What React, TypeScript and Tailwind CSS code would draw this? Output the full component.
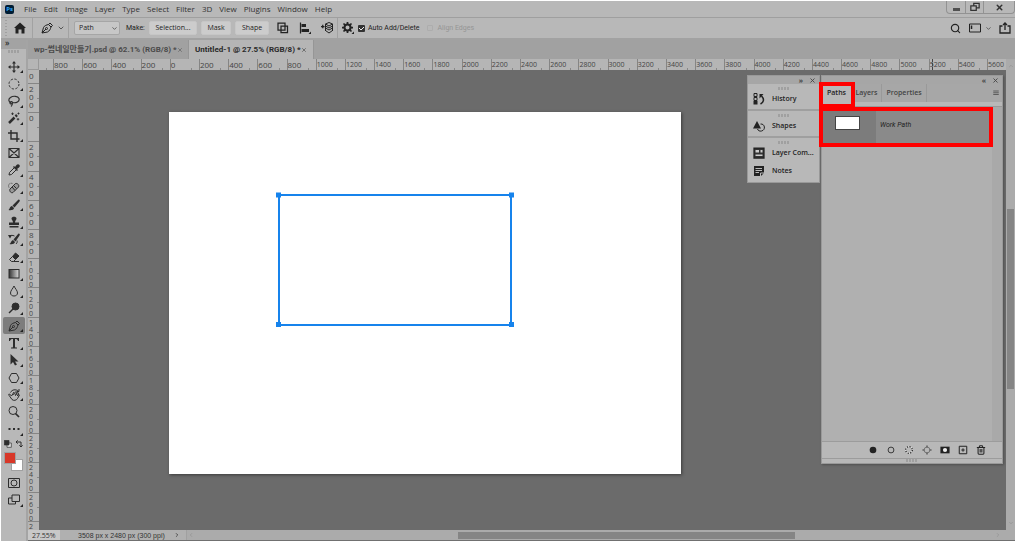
import React from "react";
import { ChevronDown, Search, Trash2, X } from "lucide-react";

type ToolProps = {
  name: string;
  icon: React.ReactNode;
  active?: boolean;
  single?: boolean;
};

const menus = [
  "File",
  "Edit",
  "Image",
  "Layer",
  "Type",
  "Select",
  "Filter",
  "3D",
  "View",
  "Plugins",
  "Window",
  "Help",
];

const Svg = ({
  children,
  size = "size-3",
}: {
  children: React.ReactNode;
  size?: string;
}) => (
  <svg
    viewBox="0 0 24 24"
    fill="none"
    stroke="currentColor"
    strokeWidth="2"
    className={`${size} shrink-0`}
    aria-hidden="true"
  >
    {children}
  </svg>
);

const PenIcon = () => (
  <Svg>
    <path d="M2 22L5 11C7 7 11 6 15 5L20 10C19 14 17 18 13 20L2 22Z" />
    <path d="M15 5L18 2L23 7L20 10M2 22L10 14" />
    <circle cx="11" cy="13" r="2" />
  </Svg>
);

const tools: ToolProps[] = [
  {
    name: "Move",
    icon: (
      <Svg>
        <path d="M12 2V22M2 12H22" strokeWidth="2.4" />
        <path
          d="M12 0L16 5H8ZM12 24L16 19H8ZM0 12L5 8V16ZM24 12L19 8V16Z"
          fill="currentColor"
          stroke="none"
        />
      </Svg>
    ),
  },
  {
    name: "Elliptical Marquee",
    icon: (
      <Svg>
        <circle cx="12" cy="12" r="10" strokeDasharray="4.5 3.3" />
      </Svg>
    ),
  },
  {
    name: "Lasso",
    icon: (
      <Svg>
        <path d="M6 16C1 14 0 8 5 5C10 1 20 2 22 7C24 13 16 17 9 15" strokeWidth="2.3" />
        <path d="M9 15C8 12 4 13 4 16C4 19 9 18 9 15C9 18 9 21 6 23" strokeWidth="2.3" />
      </Svg>
    ),
  },
  {
    name: "Magic Wand",
    icon: (
      <Svg>
        <path d="M2 22L13 11" strokeWidth="5" />
        <path d="M15 9L18 6" strokeWidth="5" />
        <path d="M9 1V6M6.5 3.5H11.5M21 1V5M19 3H23M20 12V17M17.5 14.5H22.5" strokeWidth="1.8" />
      </Svg>
    ),
  },
  {
    name: "Crop",
    icon: (
      <Svg>
        <path d="M6 0V18H23M0 6H18V24" strokeWidth="2.8" />
      </Svg>
    ),
  },
  {
    name: "Frame",
    single: true,
    icon: (
      <Svg>
        <path d="M2 3H22V21H2ZM2 3L22 21M22 3L2 21" strokeWidth="2.3" />
      </Svg>
    ),
  },
  {
    name: "Eyedropper",
    icon: (
      <Svg>
        <path d="M12 8L3 17L2 22L7 21L16 12" />
        <path
          d="M10 6L12 4L14 6L17 2C19 0 21 0 23 2C24 4 24 5 22 7L18 10L20 12L18 14Z"
          fill="currentColor"
          stroke="none"
        />
      </Svg>
    ),
  },
  {
    name: "Healing Brush",
    icon: (
      <Svg>
        <path d="M4 14L15 3C19 2 23 6 21 10L10 21C6 23 2 18 4 14Z" fill="#999" />
        <path d="M8 10L14 17M11 7L17 13" />
        <path d="M2 11C-1 5 4 1 9 3" strokeDasharray="2 2" strokeWidth="1.6" />
      </Svg>
    ),
  },
  {
    name: "Brush",
    icon: (
      <Svg>
        <path
          d="M9 13L21 1C24 1 24 3 23 5L13 17ZM8 14L12 18C12 22 6 23 1 22C4 20 3 15 8 14Z"
          fill="currentColor"
          stroke="none"
        />
      </Svg>
    ),
  },
  {
    name: "Clone Stamp",
    icon: (
      <Svg>
        <path
          d="M7 5C7 0 17 0 17 5C17 8 14 9 14 13H22V18H2V13H10C10 9 7 8 7 5ZM3 20H21V23H3Z"
          fill="currentColor"
          stroke="none"
        />
      </Svg>
    ),
  },
  {
    name: "History Brush",
    icon: (
      <Svg>
        <path
          d="M11 13L21 1C24 1 24 3 23 5L15 17ZM10 14L14 18C13 22 8 23 3 22C7 20 5 16 10 14Z"
          fill="currentColor"
          stroke="none"
        />
        <path d="M2 8C5 4 9 4 13 6M18 15C19 18 18 20 16 22" />
        <path d="M0 4L8 4L4 11Z" fill="currentColor" stroke="none" />
      </Svg>
    ),
  },
  {
    name: "Eraser",
    icon: (
      <Svg>
        <path d="M9 11L15 4L22 10L15 17Z" fill="currentColor" />
        <path d="M9 11L3 17L7 21H11L15 17M11 21H22" />
      </Svg>
    ),
  },
  {
    name: "Gradient",
    icon: (
      <Svg>
        <defs>
          <linearGradient id="toolGradient">
            <stop stopColor="#333" />
            <stop offset="1" stopColor="#ddd" />
          </linearGradient>
        </defs>
        <rect x="2" y="3" width="20" height="17" fill="url(#toolGradient)" />
      </Svg>
    ),
  },
  {
    name: "Blur",
    icon: (
      <Svg>
        <path d="M12 2C10 7 5 11 5 16C5 24 19 24 19 16C19 11 14 7 12 2Z" />
      </Svg>
    ),
  },
  {
    name: "Dodge",
    icon: (
      <Svg>
        <circle cx="15" cy="9" r="7" fill="currentColor" />
        <path d="M10 14L2 22" strokeWidth="3" />
      </Svg>
    ),
  },
  { name: "Pen", icon: <PenIcon />, active: true },
  {
    name: "Type",
    icon: (
      <Svg>
        <path
          d="M2 2H22V8H20C19 5 18 4 14 4V19C14 21 15 21 18 21V23H6V21C9 21 10 21 10 19V4C6 4 5 5 4 8H2Z"
          fill="currentColor"
          stroke="none"
        />
      </Svg>
    ),
  },
  {
    name: "Path Selection",
    icon: (
      <Svg>
        <path d="M5 0V21L10 16L14 23L18 21L14 15H21Z" fill="currentColor" stroke="none" />
      </Svg>
    ),
  },
  {
    name: "Polygon",
    icon: (
      <Svg>
        <path d="M7 3H17L22 12L17 21H7L2 12Z" />
      </Svg>
    ),
  },
  {
    name: "Rotate View",
    icon: (
      <Svg>
        <path d="M7 14L3 10C1 9 1 12 3 14L8 21C11 24 17 23 19 19L23 12C22 10 20 11 19 14L21 8C20 6 18 7 17 10L15 13L17 7C16 5 14 6 13 8L11 12M7 14L12 6" />
        <path d="M5 7C8 1 15 0 21 4M22 0V5H17" />
      </Svg>
    ),
  },
  {
    name: "Zoom",
    single: true,
    icon: (
      <Svg>
        <circle cx="10" cy="9" r="8" />
        <path d="M15 15L22 22" strokeWidth="3.5" />
      </Svg>
    ),
  },
  {
    name: "Edit Toolbar",
    icon: (
      <Svg>
        <path d="M1 12H5M10 12H14M19 12H23" strokeWidth="4" />
      </Svg>
    ),
  },
];

const rulerTop = Array.from({ length: 33 }, (_, i) => Math.abs(i * 200 - 800));
const rulerLeft = Array.from({ length: 16 }, (_, i) => Math.abs(i * 200 - 200));

const Corner = () => (
  <svg viewBox="0 0 3 3" className="absolute right-0.5 bottom-0.5 size-[3px]">
    <path d="M3 0V3H0Z" fill="#222" />
  </svg>
);

const Tool = ({ name, icon, active, single }: ToolProps) => (
  <button
    type="button"
    aria-label={name}
    className={`relative ml-0.5 flex w-[22px] items-center pl-[5px] ${
      active ? "rounded-xs bg-[#7d7d7d]" : ""
    }`}
  >
    {icon}
    {!single && <Corner />}
  </button>
);

const Grip = () => (
  <div className="mx-auto h-[3px] w-3 bg-[repeating-linear-gradient(90deg,#a0a0a0_0_2px,transparent_2px_3px)]" />
);

const Divider = () => <div className="h-full w-px bg-[#a2a2a2]" />;

const MenuBar = () => (
  <header className="flex h-[17px] shrink-0 items-center border-b border-[#9f9f9f] pl-1 text-[#333]">
    <span className="flex size-[9px] items-center justify-center rounded-xs bg-[#001d34] text-[6px] font-bold text-[#31a8ff]">
      Ps
    </span>
    <nav className="ml-2.5 flex items-center gap-[7px]">
      {menus.map((menu) => (
        <button type="button" key={menu} className="text-[8px] leading-4">
          {menu}
        </button>
      ))}
    </nav>
    <div className="ml-auto flex h-[13px] self-start rounded-b-sm border border-t-0 border-[#929292]">
      <button
        type="button"
        aria-label="Minimize"
        className="flex w-[19px] items-center justify-center border-r border-[#929292]"
      >
        <span className="mt-1 h-[3px] w-[7px] bg-[#505050]" />
      </button>
      <button
        type="button"
        aria-label="Restore"
        className="flex w-[18px] items-center justify-center border-r border-[#929292]"
      >
        <Svg size="size-2.5">
          <path d="M9 9V3H22V14H15M2 9H15V20H2Z" strokeWidth="3" />
        </Svg>
      </button>
      <button
        type="button"
        aria-label="Close"
        className="flex w-[30px] items-center justify-center"
      >
        <X className="size-[9px]" strokeWidth={4} />
      </button>
    </div>
  </header>
);

const actionClass =
  "h-3.5 rounded-xs border border-[#c6c6c6] bg-[#cccccc] text-center font-['Open_Sans'] text-[7px] font-medium text-[#222]";

const OptionsBar = () => (
  <div className="flex h-[22px] shrink-0 items-center border-b-2 border-[#a2a2a2] pl-1 font-['Roboto',sans-serif] text-[7px] text-[#222]">
    <div className="h-4 w-[2px] bg-[repeating-linear-gradient(#a0a0a0_0_1px,transparent_1px_3px)]" />
    <button type="button" aria-label="Home" className="ml-[7px]">
      <Svg>
        <path
          d="M12 1L0 12H3V23H9V15H15V23H21V12H24Z"
          fill="currentColor"
          stroke="none"
        />
      </Svg>
    </button>
    <div className="ml-1.5 h-full">
      <Divider />
    </div>
    <button type="button" aria-label="Pen tool presets" className="ml-2 flex items-center gap-1">
      <PenIcon />
      <ChevronDown className="size-2" />
    </button>
    <div className="ml-[3px] h-full">
      <Divider />
    </div>
    <label className="relative ml-[5px] flex items-center">
      <select
        aria-label="Tool mode"
        className="h-3.5 w-[46px] appearance-none rounded-xs border border-[#a6a6a6] bg-[#c7c7c7] pl-1 font-['Open_Sans'] text-[7px] font-medium"
      >
        <option>Path</option>
      </select>
      <ChevronDown className="pointer-events-none absolute right-0.5 size-[7px]" />
    </label>
    <span className="ml-1.5 w-[23px]">Make:</span>
    <button type="button" className={`w-12 ${actionClass}`}>
      Selection...
    </button>
    <button type="button" className={`ml-1 w-[30px] ${actionClass}`}>
      Mask
    </button>
    <button type="button" className={`ml-1 w-[34px] ${actionClass}`}>
      Shape
    </button>
    <div className="ml-2 flex items-center gap-2.5">
      <button type="button" aria-label="Path operations">
        <Svg>
          <path d="M2 2H16V16H2ZM8 8H21V21H8Z" strokeWidth="2.5" />
        </Svg>
      </button>
      <button type="button" aria-label="Path alignment">
        <Svg>
          <path d="M3 1V23" strokeWidth="2.5" />
          <path d="M5 4H14V10H5ZM5 14H20V20H5Z" fill="currentColor" stroke="none" />
          <path d="M24 19V24H19Z" fill="currentColor" stroke="none" />
        </Svg>
      </button>
      <button type="button" aria-label="Path arrangement">
        <Svg>
          <path d="M0 9H7M3.500 5.500V12.500" strokeWidth="2.5" />
          <path d="M16 1L23 4L16 8L9 4ZM9 8L16 12L23 8M9 12L16 16L23 12M9 17L16 22L23 17M9 4V18M23 4V18" />
        </Svg>
      </button>
    </div>
    <div className="ml-1 h-full">
      <Divider />
    </div>
    <button type="button" aria-label="Path options" className="ml-1">
      <Svg>
        <circle cx="11" cy="11" r="6" strokeWidth="4" />
        <path
          d="M11 0V4M11 18V22M0 11H4M18 11H22M3 3L6 6M16 16L19 19M19 3L16 6M3 19L6 16"
          strokeWidth="3.5"
        />
        <path d="M24 19V24H19Z" fill="currentColor" stroke="none" />
      </Svg>
    </button>
    <label className="ml-1 flex items-center gap-[3px]">
      <span className="relative flex size-[7px] items-center justify-center">
        <input
          type="checkbox"
          defaultChecked
          className="size-[7px] appearance-none rounded-[1px] bg-[#333]"
        />
        <svg viewBox="0 0 7 7" className="pointer-events-none absolute size-[7px]">
          <path d="M1 3L3 5L6 2" fill="none" stroke="#eee" />
        </svg>
      </span>
      Auto Add/Delete
    </label>
    <label className="ml-2 flex items-center gap-1 text-[#959595]">
      <input
        type="checkbox"
        disabled
        className="size-1.5 appearance-none rounded-[1px] border border-[#adadad]"
      />
      Align Edges
    </label>
    <div className="mr-1 ml-auto flex items-center">
      <button type="button" aria-label="Search">
        <Search className="size-[11px]" strokeWidth={2.5} />
      </button>
      <button type="button" aria-label="Workspace" className="ml-2 flex items-center gap-1">
        <Svg>
          <path d="M1 4H23V20H1Z" />
          <path d="M5 7V14" strokeWidth="3" />
        </Svg>
        <ChevronDown className="size-[7px]" />
      </button>
      <button type="button" aria-label="Share" className="ml-[7px]">
        <Svg>
          <path d="M7 8H2V22H22V8H17M12 16V3M8 6L12 2L16 6" strokeWidth="2.6" />
        </Svg>
      </button>
    </div>
  </div>
);

const Toolbar = () => (
  <aside className="w-[27px] shrink-0 border-r-2 border-[#a4a4a4] text-[#2d2d2d]">
    <div className="h-[9px] bg-[#a3a3a3] pl-1 text-[8px] leading-[6px] font-semibold">»</div>
    <div className="pt-px pb-[5px]">
      <Grip />
    </div>
    <div className="grid h-[380px] auto-rows-fr">
      {tools.map((tool) => (
        <Tool key={tool.name} {...tool} />
      ))}
    </div>
    <div className="mt-0.5 flex justify-between px-[3px]">
      <button type="button" aria-label="Default colors">
        <Svg size="size-2">
          <path d="M9 9H22V22H9Z" fill="#ddd" />
          <path d="M1 1H15V15H1Z" fill="currentColor" />
        </Svg>
      </button>
      <button type="button" aria-label="Swap colors">
        <Svg size="size-2">
          <path d="M3 6H18V21M8 1L3 6L8 11M13 16L18 21L23 16" strokeWidth="3" />
        </Svg>
      </button>
    </div>
    <div className="relative mt-1 ml-[3px] h-[19px] w-[19px]">
      <button
        type="button"
        aria-label="Background color"
        className="absolute right-0 bottom-0 size-3 border border-[#a0a0a0] bg-white"
      />
      <button
        type="button"
        aria-label="Foreground color"
        className="absolute top-0 left-0 size-3 border border-[#a0a0a0] bg-[#d83728]"
      />
    </div>
    <div className="mt-[3px] grid h-[35px] auto-rows-fr">
      <Tool
        name="Quick Mask"
        single
        icon={
          <Svg>
            <path d="M1 3H23V21H1Z" />
            <circle cx="12" cy="12" r="6" />
          </Svg>
        }
      />
      <Tool
        name="Screen Mode"
        icon={
          <Svg>
            <path d="M8 2H23V15H8ZM8 8H1V20H15V15" />
          </Svg>
        }
      />
    </div>
  </aside>
);

const DocumentTabs = () => (
  <div className="flex h-[19px] shrink-0 bg-[#a1a1a1] font-['Roboto','Noto_Sans_CJK_KR',sans-serif] text-[8px] font-bold">
    <button
      type="button"
      className="flex w-[161px] items-center justify-between border-r border-[#969696] px-1.5 whitespace-nowrap text-[#4b4b4b]"
    >
      wp-썸네일만들기.psd @ 62.1% (RGB/8) *
      <X className="size-1.5 shrink-0" />
    </button>
    <button
      type="button"
      className="flex w-[125px] items-center justify-between border-r border-[#969696] bg-[#b5b5b5] px-1.5 whitespace-nowrap text-[#2a2a2a]"
    >
      Untitled-1 @ 27.5% (RGB/8) *
      <X className="size-1.5 shrink-0" />
    </button>
  </div>
);

const HorizontalRuler = () => (
  <div className="relative flex h-[11px] shrink-0 overflow-hidden bg-[#b5b5b5] leading-[11px] text-[#444]">
    <div className="w-[11px] shrink-0 border-r border-b border-[#999]" />
    <div className="flex w-[14px] shrink-0 items-end justify-center">
      <span className="h-0.5 w-px bg-[#888]" />
    </div>
    <div className="flex w-[963px] shrink-0">
      {rulerTop.map((value, i) => (
        <div
          key={i}
          className={`flex flex-1 items-end justify-between border-l border-[#858585] ${
            value > 999 ? "text-[7px]" : "text-[8px]"
          }`}
        >
          <span>{value}</span>
          <span className="mr-[7px] h-0.5 w-px bg-[#888]" />
        </div>
      ))}
    </div>
    {/* pointer position */}
    <span className="absolute top-0 right-[73px] h-full border-l border-dashed border-[#444]" />
  </div>
);

const VerticalRuler = () => (
  <div className="flex w-[11px] shrink-0 flex-col overflow-hidden bg-[#b5b5b5] text-[#444]">
    <div className="h-[13px] shrink-0 pl-px text-[8px] leading-3">0</div>
    <div className="flex h-[467px] shrink-0 flex-col">
      {rulerLeft.map((value, i) => (
        <div
          key={i}
          className={`flex h-0 flex-1 justify-between border-t border-[#858585] pl-px ${
            value > 999 ? "text-[7px] leading-[7px]" : "text-[8px] leading-2"
          }`}
        >
          <div className="flex flex-col pt-px">
            {String(value)
              .split("")
              .map((digit, n) => (
                <span key={n}>{digit}</span>
              ))}
          </div>
          <span className="mt-3.5 h-px w-0.5 bg-[#888]" />
        </div>
      ))}
    </div>
  </div>
);

const Artboard = () => (
  <div className="absolute top-[42px] left-[130px] h-[362px] w-[512px] bg-white shadow-[1px_1px_3px_#3c3c3c]">
    <svg viewBox="0 0 512 362" className="size-full">
      <rect
        x="110"
        y="83"
        width="232"
        height="130"
        fill="none"
        stroke="#1683ec"
        strokeWidth="2"
      />
      {[109.5, 342.5].map((x) =>
        [83, 212.5].map((y) => (
          <rect
            key={`${x}-${y}`}
            x={x - 2.5}
            y={y - 2.5}
            width="5"
            height="5"
            fill="#1683ec"
          />
        )),
      )}
    </svg>
  </div>
);

const PanelHeader = ({ arrows }: { arrows: string }) => (
  <div className="flex h-2 shrink-0 items-center justify-end gap-1.5 bg-[#a6a6a6] pr-[3px] text-[7px] leading-none font-bold text-[#444]">
    <span>{arrows}</span>
    <button type="button" aria-label="Close panel">
      <X className="size-[7px]" strokeWidth={3} />
    </button>
  </div>
);

const IconRow = ({ name, icon }: { name: string; icon: React.ReactNode }) => (
  <button
    type="button"
    className="flex h-[18px] w-full items-center gap-[7px] pl-[5px] text-left font-semibold"
  >
    {icon}
    {name}
  </button>
);

const CollapsedPanels = () => (
  <section className="absolute top-[5px] right-[186px] w-[73px] border border-[#999] bg-[#b8b8b8] text-[7px] text-[#222]">
    <PanelHeader arrows="»" />
    <div className="h-[27px] border-b-2 border-[#9f9f9f] pt-[3px]">
      <Grip />
      <IconRow
        name="History"
        icon={
          <Svg>
            <path d="M2 1H8V7H2ZM2 9H8V15H2Z" />
            <path d="M1 16H9V23H1Z" fill="currentColor" stroke="none" />
            <path d="M15 22C22 18 23 12 17 6" strokeWidth="3" />
            <path d="M13 2H21L13 11Z" fill="currentColor" stroke="none" />
          </Svg>
        }
      />
    </div>
    <div className="h-[27px] border-b-2 border-[#9f9f9f] pt-[3px]">
      <Grip />
      <IconRow
        name="Shapes"
        icon={
          <Svg>
            <path d="M8 2L16 17H0Z" fill="currentColor" stroke="none" />
            <path d="M15 8C24 7 26 20 17 22C13 23 10 21 9 18" />
          </Svg>
        }
      />
    </div>
    <div className="h-11 pt-[3px]">
      <Grip />
      <IconRow
        name="Layer Com..."
        icon={
          <Svg>
            <path d="M2 2H22V22H2Z" fill="#333" strokeWidth="2.5" />
            <path d="M5 6H12V11H5ZM15 6H19V11H15ZM5 15H19V18H5Z" fill="#ccc" stroke="none" />
          </Svg>
        }
      />
      <IconRow
        name="Notes"
        icon={
          <Svg>
            <path d="M2 2H22V16L16 22H2Z" fill="currentColor" stroke="none" />
            <path d="M5 7H18M5 11H18M5 15H12M15 22V16H22" stroke="#bbb" />
          </Svg>
        }
      />
    </div>
  </section>
);

const PathsPanel = () => (
  <section className="absolute top-[5px] right-[3px] flex h-[389px] w-[182px] flex-col border border-[#999] bg-[#b8b8b8] shadow-[1px_1px_2px_#505050]">
    <PanelHeader arrows="«" />
    <div className="flex h-[18px] shrink-0 bg-[#a7a7a7] text-[7px] font-semibold text-[#444]">
      <button type="button" className="w-[30px] border-r border-[#999] bg-[#b8b8b8] text-[#222]">
        Paths
      </button>
      <button type="button" className="w-[30px] border-r border-[#999]">
        Layers
      </button>
      <button type="button" className="w-[45px] border-r border-[#999]">
        Properties
      </button>
      <button type="button" aria-label="Panel menu" className="mr-[3px] ml-auto">
        <Svg size="size-1.5">
          <path d="M1 4H23M1 11H23M1 18H23" strokeWidth="3" />
        </Svg>
      </button>
    </div>
    <div className="mt-1 flex flex-1 border-t border-[#999] bg-[#b0b0b0]">
      <div className="flex-1">
        <button
          type="button"
          className="flex h-9 w-full bg-[#8a8a8a] text-left font-['Roboto',sans-serif] text-[7px] text-[#222] italic"
        >
          <span className="flex h-full w-[54px] items-center justify-center bg-[#7c7c7c]">
            <span className="mr-1 mb-1 h-3.5 w-[25px] border border-[#444] bg-white" />
          </span>
          <span className="self-center pl-1">Work Path</span>
        </button>
      </div>
      <div className="w-2.5 bg-[#a9a9a9]" />
    </div>
    <div className="flex h-[17px] shrink-0 items-center justify-end gap-2 border-t border-[#9c9c9c] pr-4 text-[#222]">
      <button type="button" aria-label="Fill path">
        <Svg size="size-2.5">
          <circle cx="12" cy="12" r="8" fill="currentColor" stroke="none" />
        </Svg>
      </button>
      <button type="button" aria-label="Stroke path">
        <Svg size="size-2.5">
          <circle cx="12" cy="12" r="7" />
        </Svg>
      </button>
      <button type="button" aria-label="Load as selection">
        <Svg size="size-2.5">
          <circle cx="12" cy="12" r="8" stroke="#eee" />
          <circle cx="12" cy="12" r="8" strokeDasharray="3 3.3" strokeWidth="3" />
        </Svg>
      </button>
      <button type="button" aria-label="Make work path" className="text-[#666]">
        <Svg size="size-2.5">
          <circle cx="12" cy="12" r="7" />
          <path
            d="M10 1H14V6H10ZM10 18H14V23H10ZM1 10H6V14H1ZM18 10H23V14H18Z"
            fill="currentColor"
            stroke="none"
          />
        </Svg>
      </button>
      <button type="button" aria-label="Add mask">
        <Svg size="size-2.5">
          <path d="M1 4H23V20H1Z" fill="currentColor" stroke="none" />
          <circle cx="12" cy="12" r="5" fill="#eee" stroke="none" />
        </Svg>
      </button>
      <button type="button" aria-label="New path">
        <Svg size="size-2.5">
          <path d="M3 3H21V21H3ZM12 8V16M8 12H16" strokeWidth="2.4" />
        </Svg>
      </button>
      <button type="button" aria-label="Delete path">
        <Trash2 className="size-2.5" strokeWidth={2.5} />
      </button>
    </div>
    <div className="h-[5px] shrink-0 border-t border-[#9c9c9c]">
      <Grip />
    </div>
    <div className="absolute top-[6px] -left-[3px] h-[26px] w-9 border-4 border-[#ff0000]" />
    <div className="absolute top-[31px] -left-[3px] h-10 w-[174px] border-4 border-[#ff0000]" />
  </section>
);

const StatusBar = () => (
  <footer className="flex h-[11px] shrink-0 items-center border-b border-[#707070] bg-[#b0b0b0] text-[7px] leading-none text-[#333]">
    <input
      aria-label="Zoom level"
      defaultValue="27.55%"
      className="h-full w-8 bg-[#c8c8c8] pl-1 font-medium"
    />
    <span className="w-[114px] pl-[18px] font-['Liberation_Sans',sans-serif] whitespace-nowrap">
      3508 px x 2480 px (300 ppi)
    </span>
    <button type="button" aria-label="Status options">
      <ChevronDown className="size-1.5 -rotate-90" strokeWidth={3} />
    </button>
    <div className="ml-1.5 flex h-full flex-1 items-center border-l border-[#a0a0a0] bg-[#ababab] pl-px text-[#888]">
      <ChevronDown className="size-1.5 rotate-90" />
      <div className="flex h-[7px] flex-1">
        <div className="basis-[33%]" />
        <div className="basis-[42%] bg-[#858585]" />
      </div>
      <ChevronDown className="mr-3.5 size-1.5 -rotate-90" />
    </div>
  </footer>
);

const VerticalScrollbar = () => (
  <div className="flex w-[9px] shrink-0 flex-col items-center bg-[#ababab] py-1 text-[#888]">
    <ChevronDown className="size-1.5 rotate-180" />
    <div className="flex w-full flex-1 flex-col px-px">
      <div className="basis-[31%]" />
      <div className="basis-[40%] bg-[#858585]" />
    </div>
    <ChevronDown className="size-1.5" />
  </div>
);

const App = () => {
  return (
    <div className="flex h-screen flex-col overflow-hidden border-t border-r border-l border-white bg-[#b8b8b8] font-['Open_Sans','Noto_Sans_CJK_KR',sans-serif]">
      <MenuBar />
      <OptionsBar />
      <div className="flex min-h-0 flex-1">
        <Toolbar />
        <div className="flex min-w-0 flex-1 flex-col">
          <DocumentTabs />
          <div className="flex min-h-0 flex-1">
            <div className="flex min-w-0 flex-1 flex-col">
              <HorizontalRuler />
              <div className="flex min-h-0 flex-1">
                <VerticalRuler />
                <main className="relative min-w-0 flex-1 overflow-hidden bg-[#6b6b6b]">
                  <Artboard />
                  <CollapsedPanels />
                  <PathsPanel />
                </main>
              </div>
            </div>
            <VerticalScrollbar />
          </div>
          <StatusBar />
        </div>
      </div>
    </div>
  );
};

export default App;
